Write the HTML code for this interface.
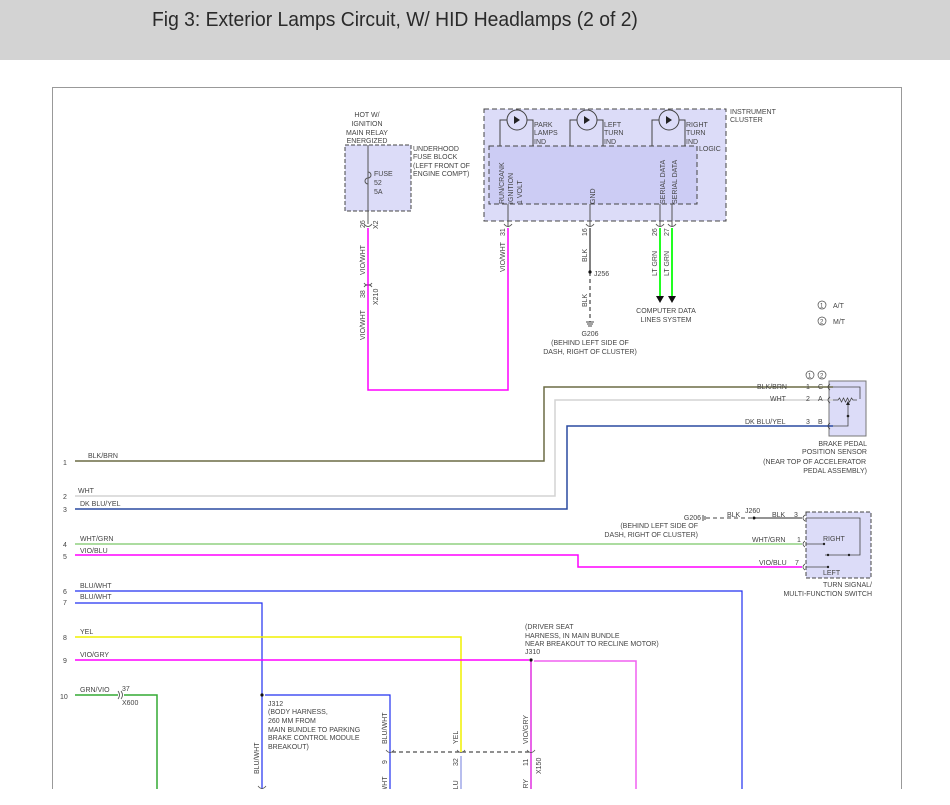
<!DOCTYPE html>
<html><head><meta charset="utf-8"><style>
html,body{margin:0;padding:0;background:#fff;width:950px;height:805px;overflow:hidden}
.hdr{position:absolute;left:0;top:0;width:950px;height:60px;background:#d3d3d3}
.hdr span{position:absolute;left:152px;top:9px;font-family:"Liberation Sans",sans-serif;font-size:20px;color:#2a2a2a;transform:scaleX(0.965);transform-origin:0 0;white-space:nowrap}
svg{position:absolute;left:0;top:0}
text{font-family:"Liberation Sans",sans-serif;font-size:7px;fill:#444}
</style></head><body>
<div class="hdr"><span>Fig 3: Exterior Lamps Circuit, W/ HID Headlamps (2 of 2)</span></div>
<svg width="950" height="805" viewBox="0 0 950 805">
<defs><clipPath id="c"><rect x="0" y="60" width="950" height="729"/></clipPath></defs>
<g clip-path="url(#c)">
<rect x="52.5" y="87.5" width="849" height="710" fill="none" stroke="#999" stroke-width="1"/>

<rect x="345" y="145" width="66" height="66" fill="#dcdcf8" stroke="#444" stroke-dasharray="4,2"/>
<line x1="368" y1="145" x2="368" y2="224" stroke="#555"/>
<path d="M368 172 a3 3 0 0 1 0 6 a3 3 0 0 0 0 6" fill="none" stroke="#555"/>
<text x="367" y="117" text-anchor="middle">HOT W/</text>
<text x="367" y="126" text-anchor="middle">IGNITION</text>
<text x="367" y="135" text-anchor="middle">MAIN RELAY</text>
<text x="367" y="143" text-anchor="middle">ENERGIZED</text>
<text x="413" y="151">UNDERHOOD</text><text x="413" y="159">FUSE BLOCK</text>
<text x="413" y="168">(LEFT FRONT OF</text><text x="413" y="176">ENGINE COMPT)</text>
<text x="374" y="176">FUSE</text><text x="374" y="185">52</text><text x="374" y="194">5A</text>
<path d="M364 224 q4 5 8 0" fill="none" stroke="#555"/>
<text transform="translate(365,228) rotate(-90)">26</text>
<text transform="translate(378,229) rotate(-90)">X2</text>
<path d="M364 283 q4 5 8 0 M364 287 q4 -5 8 0" fill="none" stroke="#555"/>
<text transform="translate(365,298) rotate(-90)">38</text>
<text transform="translate(378,305) rotate(-90)">X210</text>
<text transform="translate(365,275) rotate(-90)">VIO/WHT</text>
<text transform="translate(365,340) rotate(-90)">VIO/WHT</text>
<text transform="translate(505,272) rotate(-90)">VIO/WHT</text>
<path d="M368 228 V390 H508 V228" fill="none" stroke="#f0f" stroke-width="1.5"/>

<rect x="484" y="109" width="242" height="112" fill="#dcdcf8" stroke="#444" stroke-dasharray="5,3"/>
<rect x="489" y="146" width="208" height="58" fill="#ccccf4" stroke="#444" stroke-dasharray="5,3"/>
<g stroke="#444" fill="none">
<circle cx="517" cy="120" r="10"/><circle cx="587" cy="120" r="10"/><circle cx="669" cy="120" r="10"/>
<path d="M507 120 H500 V146 M527 120 H533 V146 M577 120 H570 V146 M597 120 H603 V146 M659 120 H652 V146 M679 120 H685 V146"/>
</g>
<g fill="#222"><path d="M514 116 L520 120 L514 124Z M584 116 L590 120 L584 124Z M666 116 L672 120 L666 124Z"/></g>
<text x="534" y="127">PARK</text><text x="534" y="135">LAMPS</text><text x="534" y="144">IND</text>
<text x="604" y="127">LEFT</text><text x="604" y="135">TURN</text><text x="604" y="144">IND</text>
<text x="686" y="127">RIGHT</text><text x="686" y="135">TURN</text><text x="686" y="144">IND</text>
<text x="730" y="114">INSTRUMENT</text><text x="730" y="122">CLUSTER</text>
<text x="699" y="151">LOGIC</text>
<text transform="translate(504,204) rotate(-90)">RUN/CRANK</text>
<text transform="translate(513,204) rotate(-90)">IGNITION</text>
<text transform="translate(522,204) rotate(-90)">1 VOLT</text>
<text transform="translate(595,204) rotate(-90)">GND</text>
<text transform="translate(665,204) rotate(-90)">SERIAL DATA</text>
<text transform="translate(677,204) rotate(-90)">SERIAL DATA</text>
<g stroke="#555" fill="none">
<path d="M508 204 V226 M590 204 V226 M660 204 V226 M672 204 V226"/>
<path d="M504 224 q4 5 8 0 M586 224 q4 5 8 0 M656 224 q4 5 8 0 M668 224 q4 5 8 0"/>
</g>
<text transform="translate(505,236) rotate(-90)">31</text>
<text transform="translate(587,236) rotate(-90)">16</text>
<text transform="translate(657,236) rotate(-90)">26</text>
<text transform="translate(669,236) rotate(-90)">27</text>
<line x1="590" y1="228" x2="590" y2="272" stroke="#555" stroke-width="1.5"/>
<line x1="590" y1="272" x2="590" y2="322" stroke="#444" stroke-width="1.2" stroke-dasharray="4,3"/>
<circle cx="590" cy="272" r="1.6" fill="#111"/>
<text x="594" y="276">J256</text>
<text transform="translate(587,262) rotate(-90)">BLK</text>
<text transform="translate(587,307) rotate(-90)">BLK</text>
<path d="M586 322 h8 M587 324 h6 M588 326 h4" stroke="#444"/>
<text x="590" y="336" text-anchor="middle">G206</text>
<text x="590" y="345" text-anchor="middle">(BEHIND LEFT SIDE OF</text>
<text x="590" y="354" text-anchor="middle">DASH, RIGHT OF CLUSTER)</text>
<path d="M660 228 V298 M672 228 V298" stroke="#2f2" stroke-width="2"/>
<path d="M656 296 h8 l-4 7z M668 296 h8 l-4 7z" fill="#111"/>
<text transform="translate(657,276) rotate(-90)">LT GRN</text>
<text transform="translate(669,276) rotate(-90)">LT GRN</text>
<text x="666" y="313" text-anchor="middle">COMPUTER DATA</text>
<text x="666" y="322" text-anchor="middle">LINES SYSTEM</text>
<circle cx="822" cy="305" r="4" fill="none" stroke="#444" stroke-width=".7"/><text x="820" y="307.5" style="font-size:6px">1</text><text x="833" y="308">A/T</text>
<circle cx="822" cy="321" r="4" fill="none" stroke="#444" stroke-width=".7"/><text x="820" y="323.5" style="font-size:6px">2</text><text x="833" y="324">M/T</text>

<rect x="829" y="381" width="37" height="55" fill="#dcdcf8" stroke="#777"/>
<path d="M75 461 H544 V387 H833" fill="none" stroke="#6b6b45" stroke-width="1.5"/>
<path d="M75 496 H555 V400 H833" fill="none" stroke="#d4d4d4" stroke-width="1.5"/>
<path d="M75 509 H567 V426 H833" fill="none" stroke="#2a4aa0" stroke-width="1.5"/>
<g stroke="#444" fill="none" stroke-width=".8">
<path d="M830 384 q-4 3 0 6 M830 397 q-4 3 0 6 M830 423 q-4 3 0 6"/>
<path d="M833 387 H860 V399 M833 400 h5 l1.5 -2 l2 4 l2 -4 l2 4 l2 -4 l2 4 l2 -4 l1.5 2 h4 M848 404 V426 H833"/>
</g>
<path d="M846 405 l2 -4 l2 4z" fill="#222"/>
<circle cx="848" cy="416" r="1.3" fill="#222"/>
<circle cx="810" cy="375" r="4" fill="none" stroke="#444" stroke-width=".7"/><text x="808" y="377.5" style="font-size:6px">1</text>
<circle cx="822" cy="375" r="4" fill="none" stroke="#444" stroke-width=".7"/><text x="820" y="377.5" style="font-size:6px">2</text>
<text x="757" y="389">BLK/BRN</text><text x="806" y="389">1</text><text x="818" y="389">C</text>
<text x="770" y="401">WHT</text><text x="806" y="401">2</text><text x="818" y="401">A</text>
<text x="745" y="424">DK BLU/YEL</text><text x="806" y="424">3</text><text x="818" y="424">B</text>
<text x="867" y="446" text-anchor="end">BRAKE PEDAL</text>
<text x="867" y="454" text-anchor="end">POSITION SENSOR</text>
<text x="866" y="464" text-anchor="end">(NEAR TOP OF ACCELERATOR</text>
<text x="867" y="473" text-anchor="end">PEDAL ASSEMBLY)</text>

<text x="63" y="465">1</text><text x="88" y="458">BLK/BRN</text>
<text x="63" y="499">2</text><text x="78" y="493">WHT</text>
<text x="63" y="512">3</text><text x="80" y="506">DK BLU/YEL</text>
<text x="63" y="547">4</text><text x="80" y="541">WHT/GRN</text>
<text x="63" y="559">5</text><text x="80" y="553">VIO/BLU</text>
<text x="63" y="594">6</text><text x="80" y="588">BLU/WHT</text>
<text x="63" y="605">7</text><text x="80" y="599">BLU/WHT</text>
<text x="63" y="640">8</text><text x="80" y="634">YEL</text>
<text x="63" y="663">9</text><text x="80" y="657">VIO/GRY</text>
<text x="60" y="699">10</text><text x="80" y="692">GRN/VIO</text>

<rect x="806" y="512" width="65" height="66" fill="#dcdcf8" stroke="#444" stroke-dasharray="4,2"/>
<line x1="706" y1="518" x2="752" y2="518" stroke="#444" stroke-dasharray="4,3"/>
<line x1="754" y1="518" x2="802" y2="518" stroke="#555" stroke-width="1.2"/>
<circle cx="754" cy="518" r="1.5" fill="#111"/>
<path d="M703 515 v6 M705 516 v4" stroke="#444"/>
<text x="701" y="520" text-anchor="end">G206</text>
<text x="727" y="517">BLK</text><text x="745" y="513">J260</text><text x="772" y="517">BLK</text><text x="794" y="517">3</text>
<text x="698" y="528" text-anchor="end">(BEHIND LEFT SIDE OF</text>
<text x="698" y="537" text-anchor="end">DASH, RIGHT OF CLUSTER)</text>
<path d="M75 544 H802" stroke="#90d080" stroke-width="1.5"/>
<path d="M75 555 H578 V567 H802" fill="none" stroke="#f0f" stroke-width="1.5"/>
<text x="752" y="542">WHT/GRN</text><text x="797" y="542">1</text>
<text x="759" y="565">VIO/BLU</text><text x="795" y="565">7</text>
<g stroke="#444" fill="none" stroke-width=".8">
<path d="M805 515 q-4 3 0 6 M805 541 q-4 3 0 6 M805 564 q-4 3 0 6"/>
<path d="M806 518 H860 V555 H825 M806 544 H824 M806 567 H828"/>
</g>
<circle cx="828" cy="555" r="1.2" fill="#222"/><circle cx="849" cy="555" r="1.2" fill="#222"/><circle cx="824" cy="544" r="1.2" fill="#222"/><circle cx="828" cy="567" r="1.2" fill="#222"/>
<text x="823" y="541">RIGHT</text><text x="823" y="575">LEFT</text>
<text x="872" y="587" text-anchor="end">TURN SIGNAL/</text>
<text x="872" y="596" text-anchor="end">MULTI-FUNCTION SWITCH</text>

<path d="M75 591 H742 V795" fill="none" stroke="#2030f0" stroke-width="1.2"/>
<path d="M75 603 H262 V795" fill="none" stroke="#2030f0" stroke-width="1.2"/>
<path d="M265 695 H390 V795" fill="none" stroke="#2030f0" stroke-width="1.2"/>
<circle cx="262" cy="695" r="1.6" fill="#111"/>
<path d="M75 637 H461 V752" fill="none" stroke="#f0f000" stroke-width="1.5"/>
<line x1="461" y1="756" x2="461" y2="795" stroke="#a0a8e8" stroke-width="1.5"/>
<path d="M75 660 H529" stroke="#f0f" stroke-width="1.5"/>
<path d="M534 661 H636 V795" fill="none" stroke="#f060f0" stroke-width="1.5"/>
<path d="M531 660 V795" stroke="#e030e0" stroke-width="1.5"/>
<circle cx="531" cy="660" r="1.6" fill="#111"/>
<path d="M75 695 H118" stroke="#3a3" stroke-width="1.5"/>
<path d="M124 695 H157 V795" fill="none" stroke="#3a3" stroke-width="1.5"/>
<path d="M118 691 q3 4 0 8 M121 691 q3 4 0 8" fill="none" stroke="#444" stroke-width=".8"/>
<text x="122" y="691">37</text><text x="122" y="705">X600</text>
<text x="525" y="629">(DRIVER SEAT</text>
<text x="525" y="638">HARNESS, IN MAIN BUNDLE</text>
<text x="525" y="646">NEAR BREAKOUT TO RECLINE MOTOR)</text>
<text x="525" y="654">J310</text>
<text x="268" y="706">J312</text>
<text x="268" y="714">(BODY HARNESS,</text>
<text x="268" y="723">260 MM FROM</text>
<text x="268" y="732">MAIN BUNDLE TO PARKING</text>
<text x="268" y="740">BRAKE CONTROL MODULE</text>
<text x="268" y="749">BREAKOUT)</text>
<line x1="392" y1="752" x2="529" y2="752" stroke="#222" stroke-dasharray="4,3"/>
<path d="M386 750 q4 5 8 0 M457 750 q4 5 8 0 M527 750 q4 5 8 0" fill="none" stroke="#555" stroke-width=".8"/>
<text transform="translate(387,744) rotate(-90)">BLU/WHT</text>
<text transform="translate(458,744) rotate(-90)">YEL</text>
<text transform="translate(528,744) rotate(-90)">VIO/GRY</text>
<text transform="translate(387,764) rotate(-90)">9</text>
<text transform="translate(458,766) rotate(-90)">32</text>
<text transform="translate(528,766) rotate(-90)">11</text>
<text transform="translate(541,774) rotate(-90)">X150</text>
<text transform="translate(387,808) rotate(-90)">BLU/WHT</text>
<text transform="translate(458,808) rotate(-90)">VIO/BLU</text>
<text transform="translate(528,808) rotate(-90)">VIO/GRY</text>
<text transform="translate(259,774) rotate(-90)">BLU/WHT</text>
<path d="M258 786 q4 5 8 0" fill="none" stroke="#555" stroke-width=".8"/>
</g>
</svg>
</body></html>
